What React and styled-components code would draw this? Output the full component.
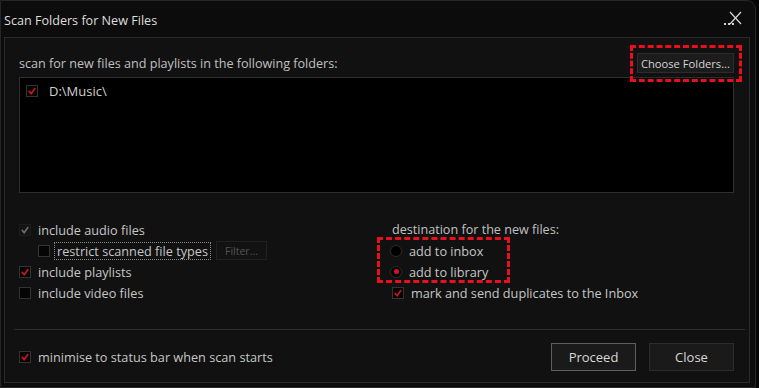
import React from 'react'
import styled, { createGlobalStyle } from 'styled-components'

const GlobalStyle = createGlobalStyle`
    html, body {
        margin: 0;
        padding: 0;
        background: #050505;
    }
    body {
        font-family: "Open Sans", "Noto Sans", sans-serif;
        font-size: 12px;
        color: #c4c4c4;
    }
`

function Tick({ color = '#c8141e' }) {
    return (
        <svg width="12" height="12" viewBox="0 0 12 12">
            <path d="M3.2 6.4 L5.2 8.8 L8.8 3.6" fill="none" stroke={color} strokeWidth="1.7" strokeLinecap="round" strokeLinejoin="round" />
        </svg>
    )
}

function CloseIcon() {
    return (
        <svg width="22" height="16" viewBox="0 0 22 16">
            <path d="M9 1 L20 13 M20 1 L9 13" stroke="#d8d8d8" strokeWidth="1.2" fill="none" />
            <circle cx="4" cy="13" r="1.1" fill="#fff" />
            <circle cx="8" cy="13" r="1.1" fill="#fff" />
            <circle cx="12" cy="13" r="1.1" fill="#fff" />
        </svg>
    )
}

function CheckOption({ checked, disabled, children, focused }) {
    return (
        <OptionRow>
            <Box disabled={disabled}>
                {checked && <Tick color={disabled ? '#6a6a6a' : '#c8141e'} />}
            </Box>
            <OptionLabel focused={focused}>{children}</OptionLabel>
        </OptionRow>
    )
}

function RadioOption({ selected, children }) {
    return (
        <OptionRow>
            <Radio>{selected && <Dot />}</Radio>
            <RadioLabel>{children}</RadioLabel>
        </OptionRow>
    )
}

export default function App() {
    return (
        <>
            <GlobalStyle />
            <Window>
                <TitleBar>
                    <Title>Scan Folders for New Files</Title>
                    <CloseIcon />
                </TitleBar>
                <Panel>
                    <Header>
                        <span>scan for new files and playlists in the following folders:</span>
                        <Marked>
                            <SmallButton>Choose Folders...</SmallButton>
                        </Marked>
                    </Header>
                    <FolderList>
                        <FolderRow>
                            <Box><Tick /></Box>
                            <FolderName>D:\Music\</FolderName>
                        </FolderRow>
                    </FolderList>
                    <Options>
                        <Column>
                            <CheckOption checked disabled>include audio files</CheckOption>
                            <Indented>
                                <CheckOption focused>restrict scanned file types</CheckOption>
                                <FilterButton>Filter...</FilterButton>
                            </Indented>
                            <CheckOption checked>include playlists</CheckOption>
                            <CheckOption>include video files</CheckOption>
                        </Column>
                        <Column>
                            <Caption>destination for the new files:</Caption>
                            <RadioGroup>
                                <RadioOption>add to inbox</RadioOption>
                                <RadioOption selected>add to library</RadioOption>
                            </RadioGroup>
                            <Nudged>
                                <CheckOption checked>mark and send duplicates to the Inbox</CheckOption>
                            </Nudged>
                        </Column>
                    </Options>
                    <Divider />
                    <Footer>
                        <CheckOption checked>minimise to status bar when scan starts</CheckOption>
                        <Actions>
                            <DialogButton primary>Proceed</DialogButton>
                            <DialogButton>Close</DialogButton>
                        </Actions>
                    </Footer>
                </Panel>
            </Window>
        </>
    )
}

const Window = styled.div`
    display: flex;
    flex-direction: column;
    box-sizing: border-box;
    width: 756px;
    height: 388px;
    background: #0c0c0c;
    border: 1px solid #262626;
    border-top-right-radius: 9px;
`

const TitleBar = styled.div`
    display: flex;
    justify-content: space-between;
    align-items: flex-start;
    height: 36px;
    box-sizing: border-box;
    padding: 10px 12px 0 3px;
`

const Title = styled.div`
    font-size: 12.6px;
    line-height: 20px;
    color: #dedede;
`

const Panel = styled.div`
    flex: 1;
    display: flex;
    flex-direction: column;
    margin: 0 5px 4px 3px;
    padding: 15px 15px 0 14px;
    background: #111111;
    border: 1px solid #2a2a2a;
`

const Header = styled.div`
    display: flex;
    justify-content: space-between;
    align-items: center;
    height: 20px;
    font-size: 12.6px;
    color: #c0c0c0;
`

const Marked = styled.span`
    position: relative;
    display: flex;

    &::after {
        content: "";
        position: absolute;
        top: -8px;
        bottom: -9px;
        left: -7px;
        right: -8px;
        border: 3px dashed #e8101c;
        pointer-events: none;
        z-index: 2;
    }
`

const SmallButton = styled.button`
    height: 20px;
    padding: 0 3px;
    font-family: inherit;
    font-size: 11.2px;
    color: #d4d4d4;
    background: #1c1c1c;
    border: 1px solid #2c2c2c;
`

const FolderList = styled.div`
    height: 116px;
    margin-top: 4px;
    background: #000;
    border: 1px solid #2e2e2e;
    padding: 6px 0 0 6px;
    box-sizing: border-box;
`

const FolderRow = styled.div`
    display: flex;
    align-items: center;
    gap: 11px;
    height: 14px;
`

const FolderName = styled.span`
    font-size: 13px;
    color: #d0d0d0;
`

const Options = styled.div`
    display: grid;
    grid-template-columns: 371px 1fr;
    margin-top: 26px;
`

const Column = styled.div`
    display: flex;
    flex-direction: column;
`

const OptionRow = styled.div`
    display: flex;
    align-items: center;
    gap: 6px;
    height: 21px;
    white-space: nowrap;
`

const Box = styled.span`
    display: flex;
    width: 12px;
    height: 12px;
    box-sizing: border-box;
    border: 1px solid ${p => (p.disabled ? '#1c1c1c' : '#333')};
    background: ${p => (p.disabled ? '#141414' : '#050505')};
    justify-content: center;
    align-items: center;
    svg { flex: none; }
`

const OptionLabel = styled.span`
    font-size: 12.7px;
    color: #c6c6c6;
    padding: 0 2px;
    margin-left: -2px;
    line-height: 16px;
    border: 1px dotted ${p => (p.focused ? '#8a8a8a' : 'transparent')};
`

const Indented = styled.div`
    display: flex;
    align-items: center;
    gap: 5px;
    padding-left: 19px;
`

const FilterButton = styled.span`
    display: flex;
    align-items: center;
    height: 19px;
    box-sizing: border-box;
    padding: 0 8px;
    font-size: 10.5px;
    color: #555;
    border: 1px solid #202020;
    background: #121212;
`

const Caption = styled.div`
    height: 21px;
    line-height: 21px;
    padding-left: 2px;
    font-size: 12.6px;
    color: #c0c0c0;
`

const RadioGroup = styled.div`
    position: relative;
    width: 105px;

    &::after {
        content: "";
        position: absolute;
        top: -3px;
        bottom: -1px;
        left: -13px;
        right: -15px;
        border: 3px dashed #e8101c;
        pointer-events: none;
    }
`

const Radio = styled.span`
    display: flex;
    justify-content: center;
    align-items: center;
    width: 12px;
    height: 12px;
    box-sizing: border-box;
    border-radius: 50%;
    background: #000;
    border: 1px solid #2a2a2a;
`

const Dot = styled.span`
    width: 5px;
    height: 5px;
    border-radius: 50%;
    background: #e0101c;
`

const RadioLabel = styled.span`
    font-size: 12.7px;
    color: #c6c6c6;
    margin-left: 1px;
`

const Nudged = styled.div`
    padding-left: 2px;
`

const Divider = styled.div`
    height: 1px;
    background: #2e2e2e;
    margin: 26px -11px 0 -5px;
`

const Footer = styled.div`
    display: flex;
    justify-content: space-between;
    align-items: center;
    padding: 13px 0 10px;
`

const Actions = styled.div`
    display: flex;
    gap: 13px;
`

const DialogButton = styled.button`
    width: 85px;
    height: 28px;
    font-family: inherit;
    font-size: 13px;
    color: #d8d8d8;
    background: #1a1a1a;
    border: 1px solid ${p => (p.primary ? '#5e5e5e' : '#2c2c2c')};
`
